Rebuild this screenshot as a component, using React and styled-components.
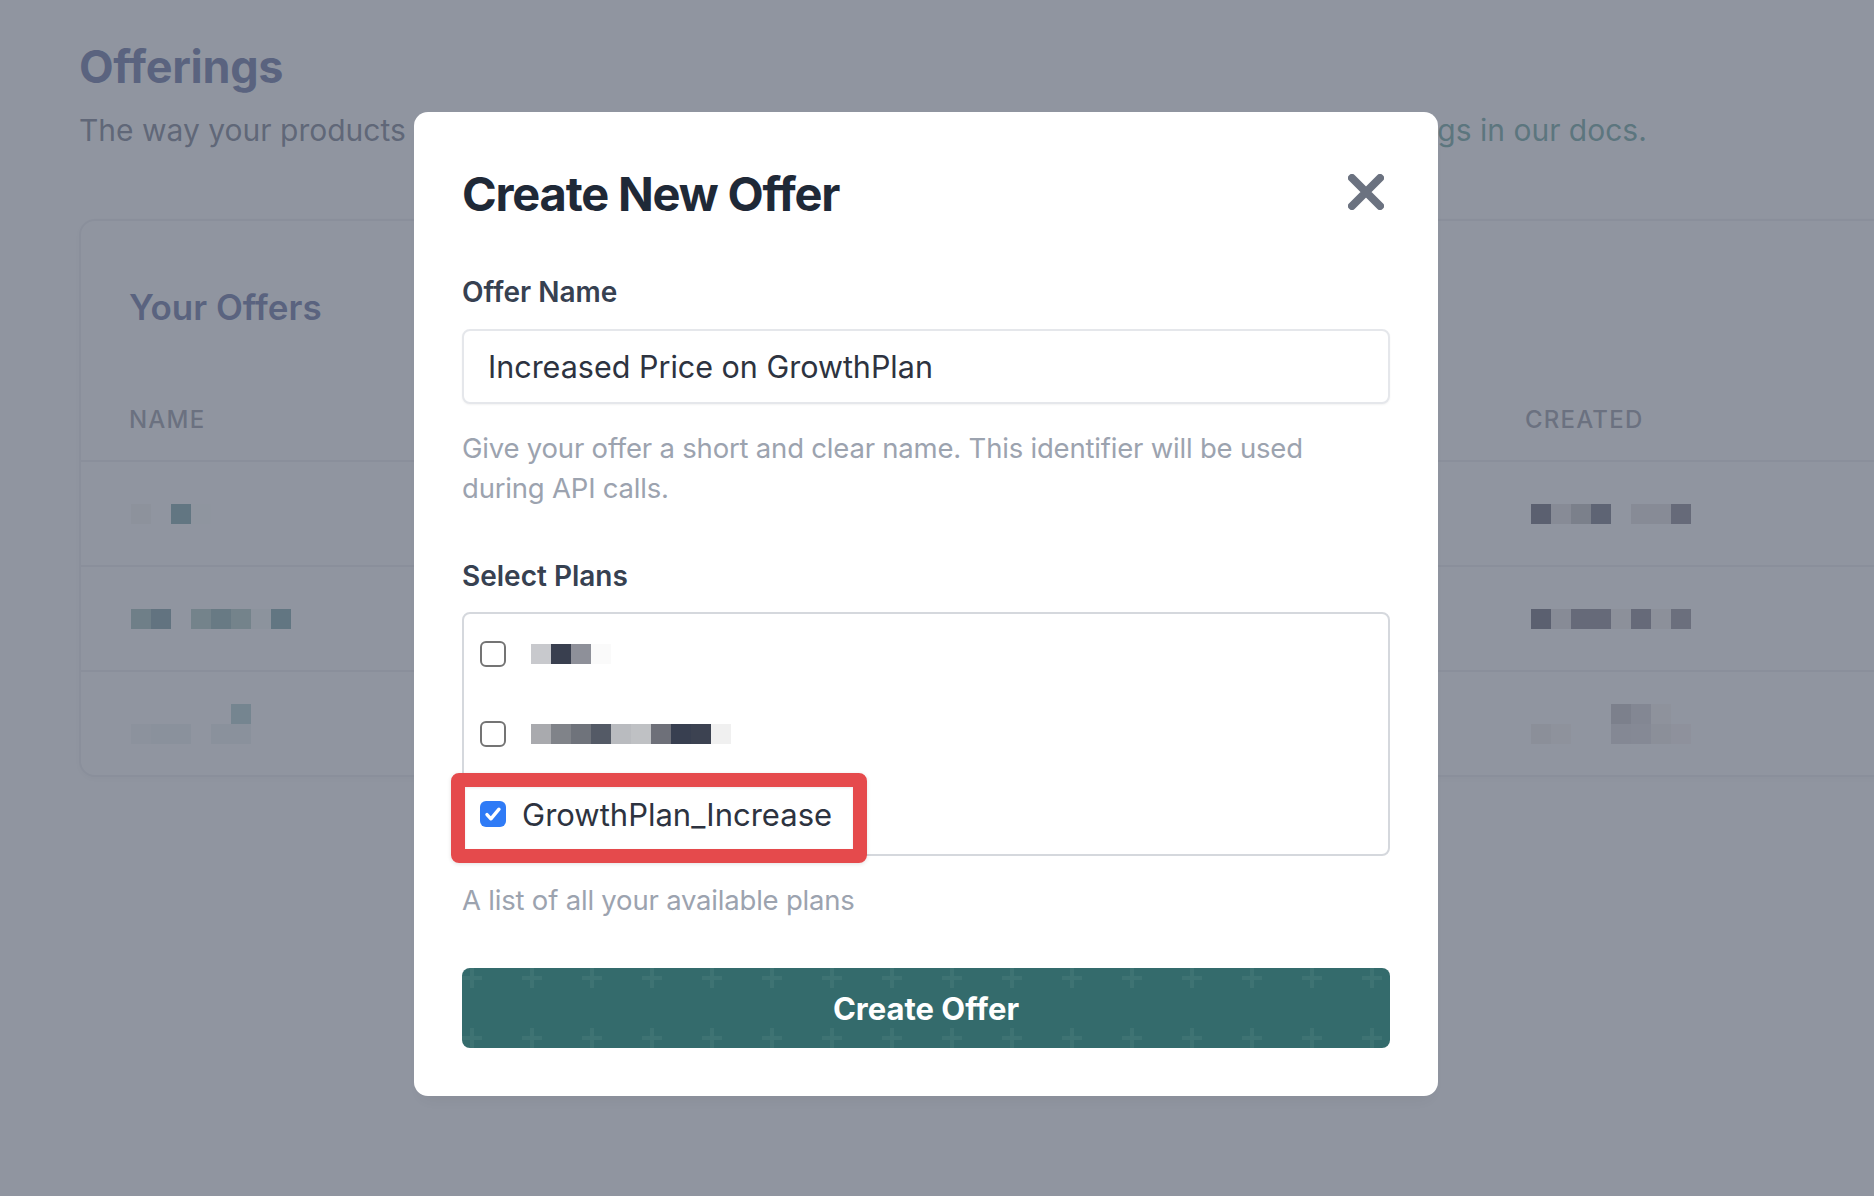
import React from 'react';
import styled, { createGlobalStyle } from 'styled-components';

const offerRows = [
  {
    name: [['#f2f4ef', null, '#478288', '#fbfdfc']],
    created: [['#2f2e40', '#dbd6d8', '#abaaac', '#3b3e50', null, '#dbd6d8', '#dbd6d8', '#575664']],
  },
  {
    name: [['#7ba6a0', '#477a80', null, '#8fb6ac', '#5f9290', '#8fb6ac', '#eff8f4', '#478288']],
    created: [['#2f2e40', '#dbd6d8', '#575664', '#575664', '#efeae8', '#575664', '#efeae8', '#6b6a74']],
  },
  {
    name: [
      [null, null, null, null, null, '#93bec0'],
      ['#f0f4f4', '#e6eef0', '#e6eef0', null, '#e6eef0', '#e6eef0'],
    ],
    created: [
      [null, null, null, null, '#afaab0', '#cbc6cc', '#f7f2f0', null],
      ['#ebe6e4', '#f7f2f0', null, null, '#cfcad0', '#d3ced4', '#ebe6e4', '#f5f0ee'],
    ],
  },
];

const plans = [
  { id: 'p1', pixels: ['#c8c9cd', '#393f4f', '#8e9099', '#fafafa'] },
  {
    id: 'p2',
    pixels: ['#a9aaae', '#808389', '#6f737b', '#545a66', '#b9bbbf', '#bfc1c4', '#6e7079', '#383f50', '#3c4251', '#f0f0f0'],
  },
  { id: 'p3', label: 'GrowthPlan_Increase', checked: true, highlight: true },
];

function Mosaic({ lines }) {
  return (
    <MosaicWrap>
      {lines.map((line, i) => (
        <MosaicLine key={i}>
          {line.map((c, j) => (
            <Pixel key={j} $c={c} />
          ))}
        </MosaicLine>
      ))}
    </MosaicWrap>
  );
}

function Checkbox({ checked }) {
  return (
    <Box role="checkbox" aria-checked={checked} $checked={checked}>
      {checked && (
        <svg width="26" height="26" viewBox="0 0 26 26">
          <path d="M7 13.6l3.9 4.2L19 8.2" fill="none" stroke="#fff" strokeWidth="3.4" strokeLinecap="round" strokeLinejoin="round" />
        </svg>
      )}
    </Box>
  );
}

export default function App() {
  return (
    <Screen>
      <GlobalStyle />
      <Page>
        <PageTitle>Offerings</PageTitle>
        <PageLead>
          The way your products are displayed to customers inside your paywall. Read more about{' '}
          <DocsLink href="#">offerings in our docs.</DocsLink>
        </PageLead>
        <Card>
          <CardHeader>
            <CardTitle>Your Offers</CardTitle>
          </CardHeader>
          <TableHead>
            <Th>Name</Th>
            <Th>Created</Th>
          </TableHead>
          {offerRows.map((row, i) => (
            <TableRow key={i} $last={i === offerRows.length - 1}>
              <Mosaic lines={row.name} />
              <Mosaic lines={row.created} />
            </TableRow>
          ))}
        </Card>
      </Page>

      <Overlay>
        <Modal>
          <ModalHeader>
            <ModalTitle>Create New Offer</ModalTitle>
            <CloseButton aria-label="Close">
              <svg width="36" height="36" viewBox="0 0 36 36">
                <path d="M4 4L32 32M32 4L4 32" stroke="#6b7280" strokeWidth="8" strokeLinecap="round" />
              </svg>
            </CloseButton>
          </ModalHeader>

          <Field>
            <Label>Offer Name</Label>
            <TextInput defaultValue="Increased Price on GrowthPlan" />
            <Help>
              Give your offer a short and clear name. This identifier will be used during API calls.
            </Help>
          </Field>

          <Field $gap={48}>
            <Label>Select Plans</Label>
            <PlanList>
              {plans.map((plan) => (
                <PlanRow key={plan.id}>
                  <Checkbox checked={!!plan.checked} />
                  {plan.label ? (
                    <PlanName>{plan.label}</PlanName>
                  ) : (
                    <PlanPixels>
                      <Mosaic lines={[plan.pixels]} />
                    </PlanPixels>
                  )}
                  {plan.highlight && <Annotation />}
                </PlanRow>
              ))}
            </PlanList>
            <Help>A list of all your available plans</Help>
          </Field>

          <SubmitButton>Create Offer</SubmitButton>
        </Modal>
      </Overlay>
    </Screen>
  );
}

const GlobalStyle = createGlobalStyle`
  html, body {
    margin: 0;
    padding: 0;
  }
  body {
    font-family: Inter, 'Noto Sans', sans-serif;
    background: #ffffff;
    -webkit-font-smoothing: antialiased;
  }
  * {
    box-sizing: border-box;
  }
`;

const Screen = styled.div`
  position: relative;
  width: 1874px;
  height: 1196px;
  overflow: hidden;
  background: #ffffff;
`;

const Page = styled.main`
  padding: 39px 0 0 79px;
`;

const PageTitle = styled.h1`
  margin: 0;
  font-size: 45px;
  line-height: 56px;
  font-weight: 700;
  letter-spacing: -0.3px;
  color: #283a7d;
`;

const PageLead = styled.p`
  margin: 15px 0 0;
  font-size: 30px;
  line-height: 40px;
  color: #404a60;
  white-space: nowrap;
`;

const DocsLink = styled.a`
  color: #33827a;
  text-decoration: none;
`;

const Card = styled.section`
  margin: 69px -80px 0 0;
  background: #ffffff;
  border: 2px solid #e5e7eb;
  border-radius: 16px;
  box-shadow: 0 2px 6px rgba(0, 0, 0, 0.06);
  overflow: hidden;
`;

const CardHeader = styled.div`
  padding: 64px 48px 0;
`;

const CardTitle = styled.h2`
  margin: 0;
  font-size: 35px;
  line-height: 44px;
  font-weight: 600;
  color: #283a7d;
`;

const TableHead = styled.div`
  display: grid;
  grid-template-columns: 1396px 1fr;
  padding: 75px 48px 24px;
  border-bottom: 2px solid #e5e7eb;
`;

const Th = styled.div`
  font-size: 24px;
  line-height: 32px;
  font-weight: 500;
  letter-spacing: 0.05em;
  text-transform: uppercase;
  color: #6b7280;
`;

const TableRow = styled.div`
  display: grid;
  grid-template-columns: 1400px 1fr;
  align-items: center;
  height: ${(p) => (p.$last ? '103px' : '105px')};
  padding: 0 48px 0 50px;
  border-bottom: ${(p) => (p.$last ? 'none' : '2px solid #e5e7eb')};
`;

const MosaicWrap = styled.div`
  display: flex;
  flex-direction: column;
`;

const MosaicLine = styled.div`
  display: flex;
`;

const Pixel = styled.span`
  width: 20px;
  height: 20px;
  background: ${(p) => p.$c || 'transparent'};
`;

const Overlay = styled.div`
  position: absolute;
  inset: 0;
  display: flex;
  justify-content: center;
  align-items: flex-start;
  padding: 112px 22px 0 0;
  background: rgba(107, 114, 128, 0.75);
`;

const Modal = styled.div`
  width: 1024px;
  padding: 48px;
  background: #ffffff;
  border-radius: 14px;
  box-shadow: 0 10px 15px -8px rgba(0, 0, 0, 0.06);
`;

const ModalHeader = styled.div`
  display: flex;
  justify-content: space-between;
  align-items: flex-start;
`;

const ModalTitle = styled.h2`
  margin: 0;
  font-size: 47px;
  line-height: 68px;
  font-weight: 700;
  letter-spacing: -1.2px;
  color: #1f2937;
`;

const CloseButton = styled.button`
  display: flex;
  align-items: center;
  justify-content: center;
  width: 48px;
  height: 48px;
  margin-top: 8px;
  padding: 0;
  border: 0;
  background: none;
  cursor: pointer;
`;

const Field = styled.div`
  margin-top: ${(p) => p.$gap || 44}px;
`;

const Label = styled.label`
  display: block;
  font-size: 28px;
  line-height: 40px;
  font-weight: 600;
  color: #374151;
`;

const TextInput = styled.input`
  display: block;
  width: 100%;
  height: 75px;
  margin-top: 17px;
  padding: 0 24px;
  border: 2px solid #e5e7eb;
  border-radius: 8px;
  box-shadow: 0 1px 2px rgba(0, 0, 0, 0.05);
  font-family: inherit;
  font-size: 30.5px;
  color: #2d3340;
  outline: none;
`;

const Help = styled.p`
  margin: 24px 0 0;
  font-size: 27.5px;
  line-height: 40px;
  letter-spacing: -0.2px;
  color: #9ca3af;
`;

const PlanList = styled.div`
  margin-top: 16px;
  border: 2px solid #d5d8dd;
  border-radius: 8px;
`;

const PlanRow = styled.div`
  position: relative;
  display: flex;
  align-items: center;
  height: 80px;
  padding-left: 16px;
`;

const Box = styled.span`
  display: flex;
  align-items: center;
  justify-content: center;
  flex: none;
  width: 26px;
  height: 26px;
  border-radius: 6px;
  background: ${(p) => (p.$checked ? '#2f7bf6' : '#ffffff')};
  border: ${(p) => (p.$checked ? 'none' : '2px solid #747474')};
`;

const PlanName = styled.span`
  margin-left: 16px;
  font-size: 31px;
  color: #2d3340;
`;

const PlanPixels = styled.div`
  margin-left: 25px;
`;

const Annotation = styled.span`
  position: absolute;
  top: -1px;
  left: -13px;
  width: 416px;
  height: 90px;
  border: 14px solid #e54a4c;
  border-radius: 8px;
  box-shadow: 0 1px 4px rgba(0, 0, 0, 0.12), inset 0 1px 3px rgba(0, 0, 0, 0.08);
  pointer-events: none;
`;

const SubmitButton = styled.button`
  display: block;
  width: 100%;
  height: 80px;
  margin-top: 48px;
  border: 0;
  border-radius: 8px;
  background-color: #346b6c;
  background-image: url("data:image/svg+xml,%3Csvg xmlns='http://www.w3.org/2000/svg' width='60' height='60'%3E%3Cpath d='M8 0h4v20H8zM0 8h20v4H0z' fill='%23ffffff' fill-opacity='0.05'/%3E%3C/svg%3E");
  background-size: 60px 60px;
  font-family: inherit;
  font-size: 31px;
  font-weight: 700;
  color: #ffffff;
  cursor: pointer;
`;
